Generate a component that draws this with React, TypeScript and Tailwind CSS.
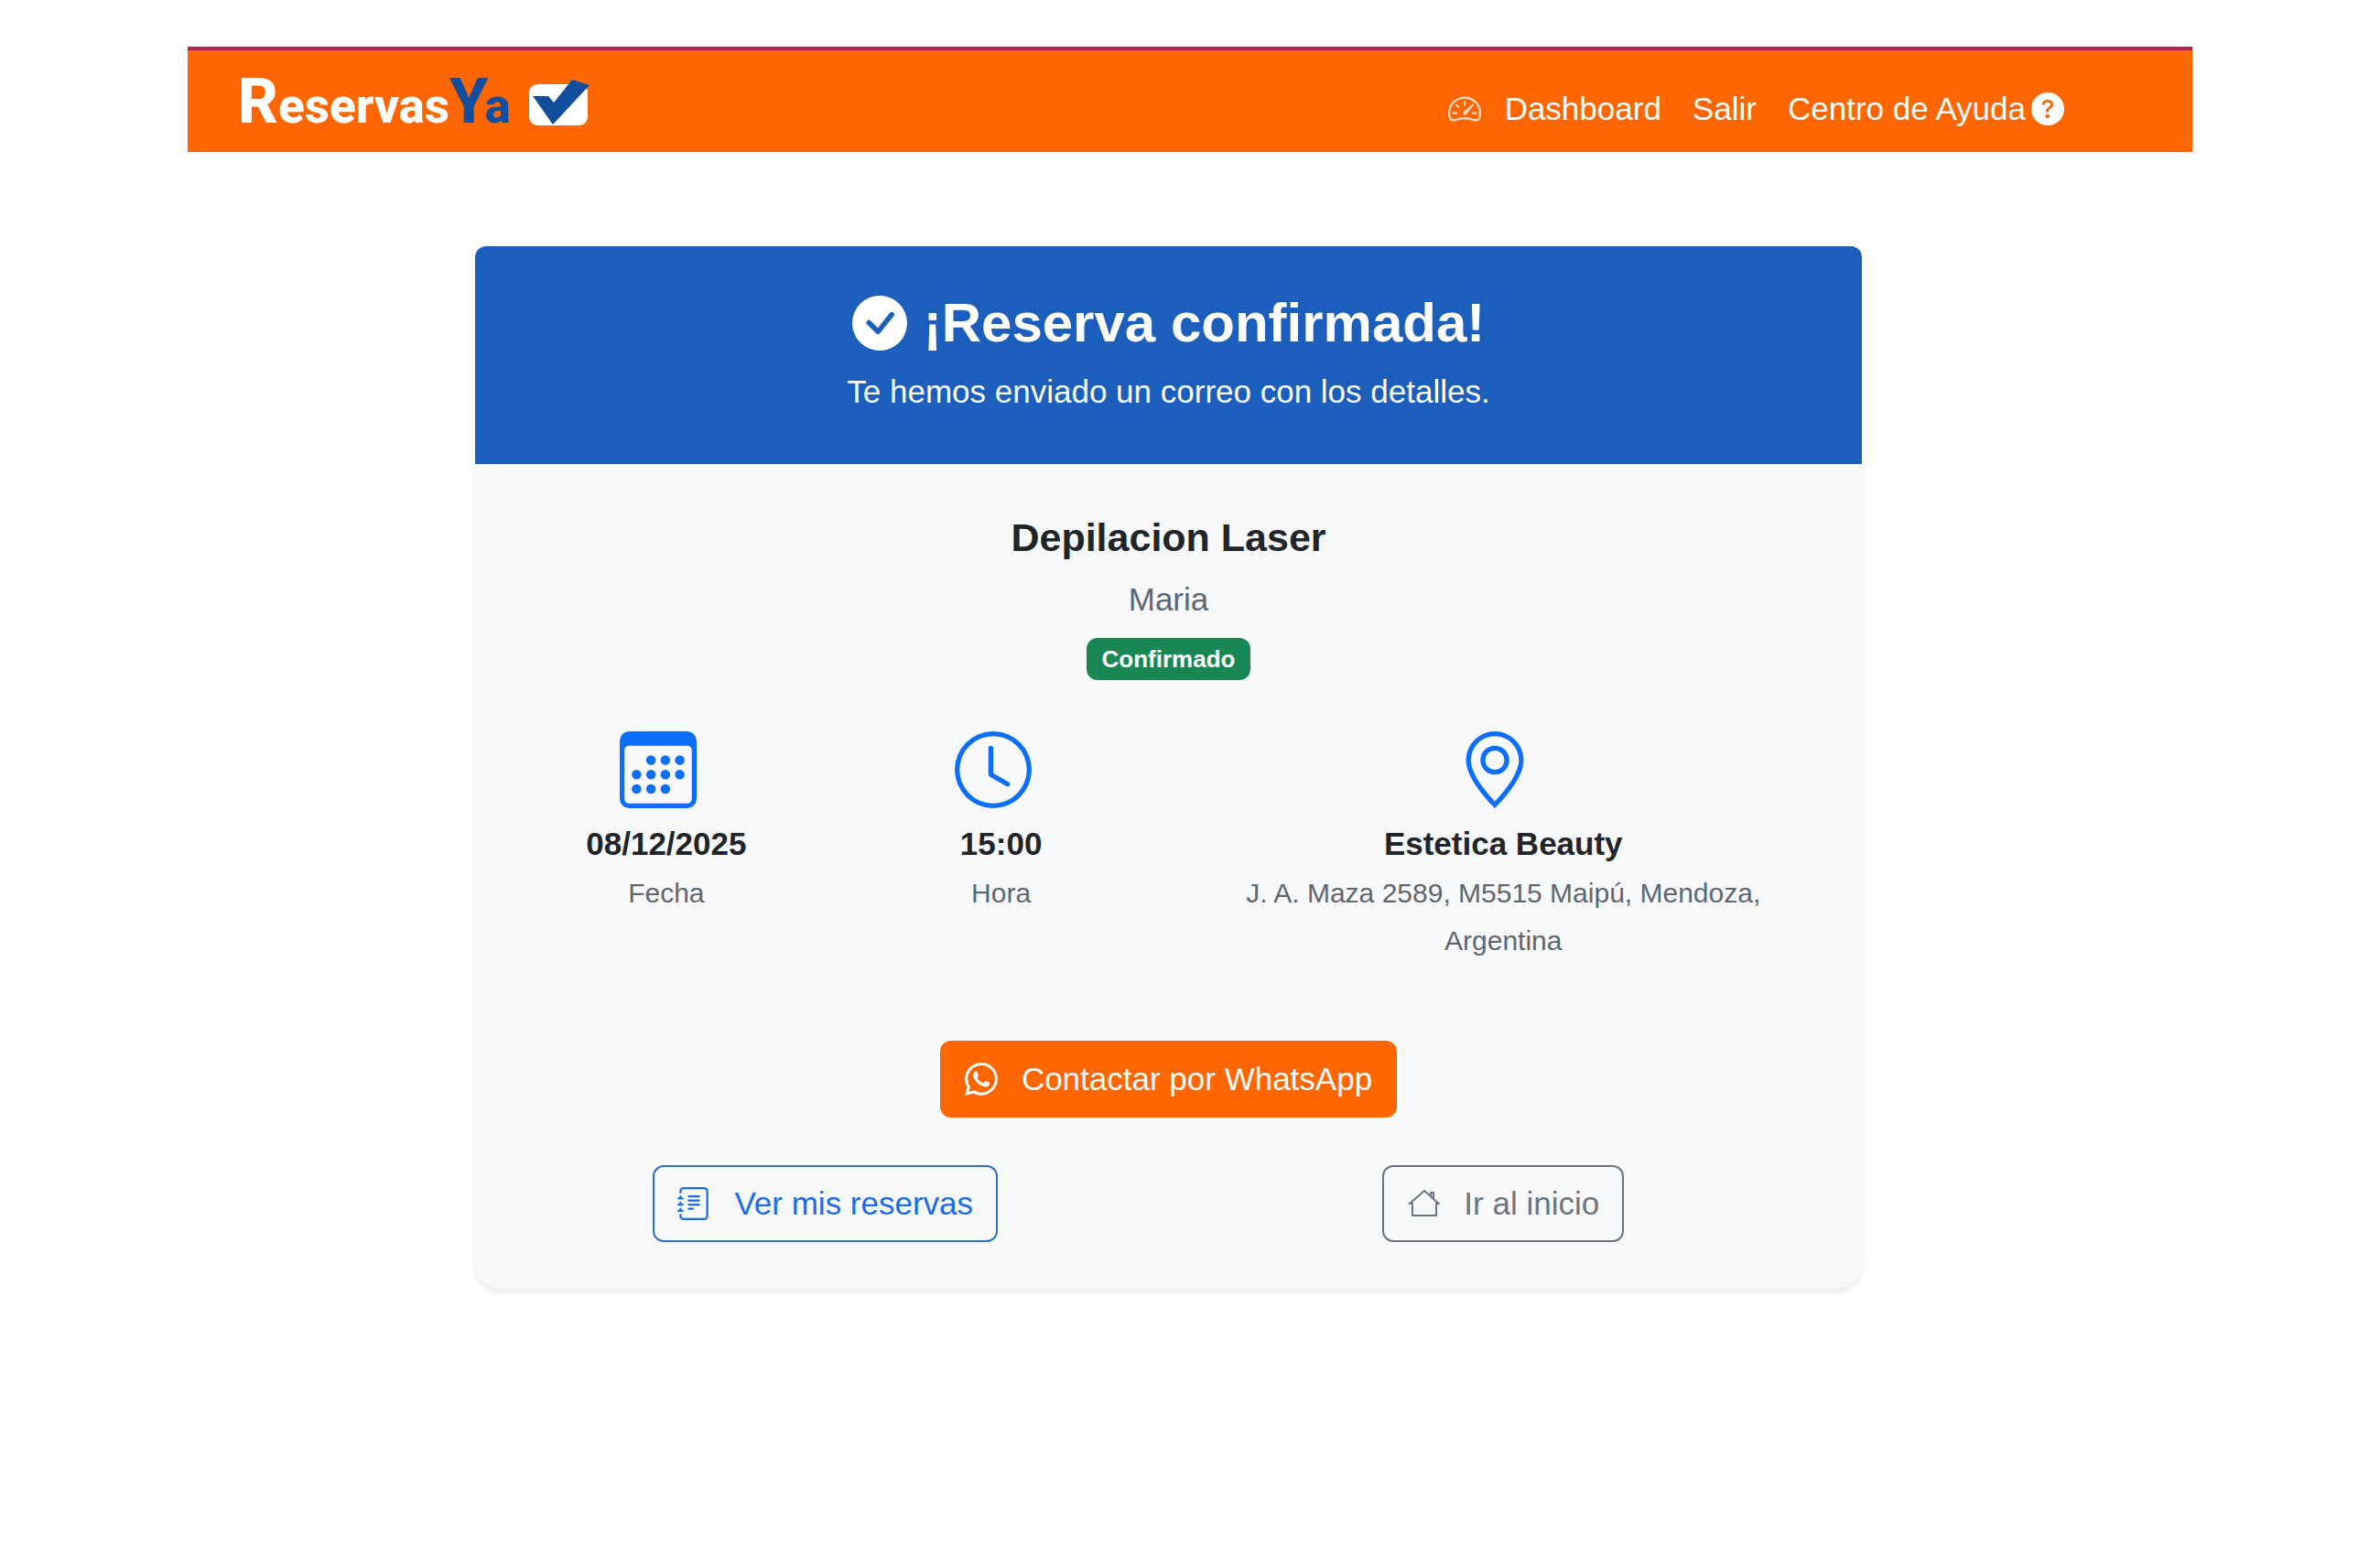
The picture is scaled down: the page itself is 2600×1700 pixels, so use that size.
import type { ComponentType, ReactNode } from "react";
import {
  BsCalendar3,
  BsCheckCircleFill,
  BsClock,
  BsGeoAlt,
  BsJournalText,
  BsQuestionCircleFill,
  BsSpeedometer2,
  BsWhatsapp,
} from "react-icons/bs";

type Icon = ComponentType<{ className?: string }>;

function HouseIcon({ className }: { className?: string }) {
  return (
    <svg
      className={className}
      viewBox="0 0 36 36"
      fill="none"
      stroke="currentColor"
      strokeWidth="2"
      strokeLinejoin="round"
      strokeLinecap="round"
      aria-hidden="true"
    >
      <path d="M6 18 V31 H32 V18" />
      <path d="M2.500 18 H6 M32 18 H35" />
      <path d="M3.500 17.500 L19 4 L34 17.500" />
      <path d="M26 9 V6 H29 V12" />
    </svg>
  );
}

function Logo() {
  return (
    <a href="#" aria-label="ReservasYa" className="flex items-end gap-[19px]">
      <span className="flex items-baseline font-['Roboto',sans-serif] text-[68px] leading-[54px] font-extrabold text-white">
        R<span className="text-[53px] leading-[40px]">eservas</span>
        <span className="text-[68px] leading-[54px] text-[#114f9e]">
          Y<span className="-ml-1 text-[53px] leading-[40px]">a</span>
        </span>
      </span>
      <svg className="h-[54px] w-[68px]" viewBox="0 0 68 54" aria-hidden="true">
        <rect x="1" y="8" width="64" height="45" rx="9" fill="#fff" />
        <path d="M5 21 L22 21 L28 28 L48 3 L67 9 L27 52 Z" fill="#114f9e" />
      </svg>
    </a>
  );
}

function Header() {
  return (
    <header className="flex min-h-[115px] flex-wrap items-center justify-between border-t-4 border-[#a8265c] bg-[#ff6600] pr-[140px] pl-[55px] shadow-sm">
      <Logo />
      <nav className="flex items-center gap-[34px] pt-4 text-[35px] leading-[52px] text-white">
        <a href="#" className="flex items-center gap-[26px]">
          <BsSpeedometer2 className="size-[36px] opacity-80" />
          Dashboard
        </a>
        <a href="#">Salir</a>
        <a href="#" className="flex items-center gap-[6px]">
          Centro de Ayuda
          <BsQuestionCircleFill className="size-[36px]" />
        </a>
      </nav>
    </header>
  );
}

function Detail({
  icon: Icon,
  title,
  children,
  className = "",
}: {
  icon: Icon;
  title: string;
  children: ReactNode;
  className?: string;
}) {
  return (
    <div className={`flex flex-col items-center px-[26px] ${className}`}>
      <Icon className="mr-[18px] size-[84px] text-[#0d6efd]" />
      <p className="mt-[13px] text-[35px] leading-[52px] font-bold">{title}</p>
      <p className="mt-0.5 text-[30px] leading-[52px] text-[#5f666d]">{children}</p>
    </div>
  );
}

function ActionButton({
  icon: Icon,
  children,
  className,
}: {
  icon: Icon;
  children: ReactNode;
  className: string;
}) {
  return (
    <button
      type="button"
      className={`flex h-[84px] items-center gap-[26px] rounded-[12px] border-2 px-[25px] text-[35px] leading-[52px] whitespace-nowrap ${className}`}
    >
      <Icon className="size-[36px]" />
      {children}
    </button>
  );
}

export default function App() {
  return (
    <div className="min-h-screen bg-white px-[205px] pt-[51px] pb-16 font-['Liberation_Sans',Arial,sans-serif] text-[#212529]">
      <Header />
      <main className="pt-[103px] pr-[47px]">
        <section className="mx-auto max-w-[1515px] overflow-hidden rounded-t-[12px] rounded-b-[28px] bg-[#f8f9fb] text-center shadow-[0_5px_6px_rgba(0,0,0,0.07)]">
          <div className="bg-[#1b5ebc] pt-12 pb-[53px] text-white">
            <h1 className="flex items-center justify-center gap-[18px] text-[60px] leading-[72px] font-bold">
              <BsCheckCircleFill className="size-[60px]" />
              ¡Reserva confirmada!
            </h1>
            <p className="mt-[13px] text-[35px] leading-[52px]">
              Te hemos enviado un correo con los detalles.
            </p>
          </div>

          <div className="flex flex-col items-center px-[26px] pt-[54px] pb-[51px]">
            <h2 className="text-[43px] leading-[52px] font-bold">Depilacion Laser</h2>
            <p className="mt-4 text-[35px] leading-[52px] text-[#5f666d]">Maria</p>
            <span className="mt-4 rounded-[12px] bg-[#198754] px-[17px] text-[26px] leading-[46px] font-bold text-white">
              Confirmado
            </span>

            <div className="mt-[56px] grid w-full grid-cols-4">
              <Detail icon={BsCalendar3} title="08/12/2025">
                Fecha
              </Detail>
              <Detail icon={BsClock} title="15:00">
                Hora
              </Detail>
              <Detail icon={BsGeoAlt} title="Estetica Beauty" className="col-span-2">
                J. A. Maza 2589, M5515 Maipú, Mendoza, Argentina
              </Detail>
            </div>

            <ActionButton
              icon={BsWhatsapp}
              className="mt-[83px] border-[#ff6600] bg-[#ff6600] text-white"
            >
              Contactar por WhatsApp
            </ActionButton>

            <div className="mt-[52px] grid w-full grid-cols-2 justify-items-center">
              <ActionButton
                icon={BsJournalText}
                className="mr-[18px] border-[#2f6fd0] text-[#1b6be8]"
              >
                Ver mis reservas
              </ActionButton>
              <ActionButton icon={HouseIcon} className="border-[#6c757d] text-[#6c757d]">
                Ir al inicio
              </ActionButton>
            </div>
          </div>
        </section>
      </main>
    </div>
  );
}
